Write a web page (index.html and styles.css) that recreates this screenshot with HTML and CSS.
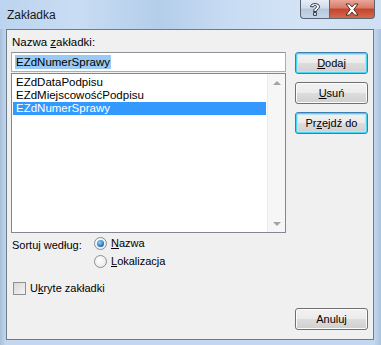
FILE: index.html
```html
<!DOCTYPE html>
<html lang="pl">
<head>
    <meta charset="UTF-8">
    <title>Zakładka</title>
    <link rel="stylesheet" href="styles.css">
</head>
<body>

    <div class="window">
        <div class="titlebar">
            <span class="title">Zakładka</span>
            <div class="caption-buttons">
                <div class="cap-btn help">
                    <svg width="12" height="15" viewBox="0 0 12 15">
                        <path d="M1.5 4.6 C1.5 0.6 10.5 0.6 10.5 4.6 C10.5 7.2 7.4 7.4 7.4 9.5 L4.6 9.5 C4.6 6.3 7.6 6.2 7.6 4.7 C7.6 3 4.4 3 4.4 4.9 Z M4.6 10.6 L7.4 10.6 L7.4 13.4 L4.6 13.4 Z" fill="#fff" stroke="#2e3440" stroke-width="1" stroke-linejoin="round"/>
                    </svg>
                </div>
                <div class="cap-btn close">
                    <svg width="16" height="13" viewBox="0 0 16 13">
                        <path d="M2 1 L5.5 1 L8 4 L10.5 1 L14 1 L9.8 6.5 L14 12 L10.5 12 L8 9 L5.5 12 L2 12 L6.2 6.5 Z" fill="#fff" stroke="#4a1d14" stroke-width="0.9" stroke-linejoin="round"/>
                    </svg>
                </div>
            </div>
        </div>

        <div class="client">
            <div class="main">
                <div class="left">
                    <div class="field-label">Nazwa <u>z</u>akładki:</div>
                    <div class="name-box"><span class="name-sel">EZdNumerSprawy</span></div>
                    <div class="list">
                        <div class="items">
                            <div class="item">EZdDataPodpisu</div>
                            <div class="item">EZdMiejscowośćPodpisu</div>
                            <div class="item selected">EZdNumerSprawy</div>
                        </div>
                        <div class="scrollbar">
                            <div class="arrow up"></div>
                            <div class="arrow down"></div>
                        </div>
                    </div>

                    <div class="sort">
                        <div class="sort-label">Sortuj według:</div>
                        <div class="radios">
                            <div class="option">
                                <span class="radio checked"></span>
                                <span><u>N</u>azwa</span>
                            </div>
                            <div class="option">
                                <span class="radio"></span>
                                <span><u>L</u>okalizacja</span>
                            </div>
                        </div>
                    </div>

                    <div class="option hidden-opt">
                        <span class="checkbox"></span>
                        <span>U<u>k</u>ryte zakładki</span>
                    </div>
                </div>

                <div class="buttons">
                    <div class="btn default"><u>D</u>odaj</div>
                    <div class="btn"><u>U</u>suń</div>
                    <div class="btn default">Pr<u>z</u>ejdź do</div>
                    <div class="btn cancel">Anuluj</div>
                </div>
            </div>
        </div>
    </div>

</body>
</html>
```

FILE: styles.css
```css
body {
    margin: 0;
    padding: 0;
    font-family: 'Liberation Sans', Arial, sans-serif;
    font-size: 11px;
    color: #000;
    background: #fff;
}
u {
    text-decoration: underline;
    text-underline-offset: 1px;
}
.window {
    width: 381px;
    height: 345px;
    display: flex;
    flex-direction: column;
    background: linear-gradient(to right, #a9bfd8 0px, #c3d8f0 6px, #c3d8f0 374px, #a9c2dd 381px);
}
.titlebar {
    height: 29px;
    display: flex;
    justify-content: space-between;
    align-items: flex-start;
    background: linear-gradient(to right, #bcd4ef 0%, #c9ddf3 20%, #b4cdea 42%, #c6dbf2 58%, #d4e4f6 80%, #cfe0f4 100%);
}
.title {
    font-size: 12px;
    color: #1a1a1a;
    margin: 8px 0 0 7px;
}
.caption-buttons {
    display: flex;
    margin-right: 6px;
}
.cap-btn {
    height: 19px;
    display: flex;
    align-items: center;
    justify-content: center;
    border: 1px solid #5b6572;
    border-top: none;
    box-sizing: border-box;
}
.cap-btn.help {
    width: 29px;
    border-right: none;
    border-radius: 0 0 0 4px;
    background: linear-gradient(#e6edf6, #cfdbea 45%, #b6c7dc 50%, #c6d6ea);
}
.cap-btn.close {
    width: 46px;
    border-radius: 0 0 4px 0;
    background: linear-gradient(#e9a698, #d67b68 45%, #c6432c 50%, #d26a50);
}
.client {
    flex: 1;
    margin: 0 7px 5px 6px;
    border: 1px solid #6d7b8b;
    background: #f0f0f0;
    padding: 3px 5px 9px 4px;
    display: flex;
}
.main {
    flex: 1;
    display: flex;
    gap: 9px;
}
.left {
    width: 275px;
    display: flex;
    flex-direction: column;
}
.field-label {
    line-height: 13px;
    margin: 3px 0 0 1px;
    font-size: 11.5px;
}
.name-box {
    height: 20px;
    margin-top: 3px;
    border: 1px solid #abadb3;
    border-top-color: #8e9299;
    background: #fff;
    box-sizing: border-box;
    padding: 2px 0 0 3px;
}
.name-sel {
    display: inline-block;
    background: #99c9f5;
    line-height: 14px;
    padding: 0 1px;
    font-size: 11.5px;
}
.list {
    height: 160px;
    margin-top: 1px;
    border: 1px solid #828790;
    background: #fff;
    box-sizing: border-box;
    display: flex;
    font-size: 11.5px;
}
.items {
    flex: 1;
    padding: 2px 1px 0 1px;
}
.item {
    line-height: 13px;
    padding-left: 3px;
}
.item.selected {
    background: #3399ff;
    color: #fff;
}
.scrollbar {
    width: 17px;
    background: #f6f6f6;
    border-left: 1px solid #ececec;
    display: flex;
    flex-direction: column;
    justify-content: space-between;
}
.arrow {
    height: 17px;
    display: flex;
    align-items: center;
    justify-content: center;
}
.arrow::after {
    content: '';
    border-left: 4px solid transparent;
    border-right: 4px solid transparent;
}
.arrow.up::after {
    border-bottom: 4px solid #a3a3a3;
}
.arrow.down::after {
    border-top: 4px solid #a3a3a3;
}
.sort {
    display: flex;
    margin-top: 4px;
}
.sort-label {
    width: 82px;
    padding-left: 1px;
    line-height: 13px;
    margin-top: 2px;
}
.radios {
    display: flex;
    flex-direction: column;
    gap: 5px;
}
.option {
    display: flex;
    align-items: center;
    gap: 4px;
    height: 13px;
    line-height: 13px;
}
.radio {
    width: 11px;
    height: 11px;
    border: 1px solid #8c8f94;
    border-radius: 50%;
    background: radial-gradient(circle at 40% 40%, #fff, #e2e3e6);
    position: relative;
}
.radio.checked::after {
    content: '';
    position: absolute;
    left: 2px;
    top: 2px;
    width: 7px;
    height: 7px;
    border-radius: 50%;
    background: radial-gradient(circle at 40% 35%, #8fd3ff, #1b6cb0 70%, #0f4d8a);
}
.hidden-opt {
    margin-top: 14px;
    margin-left: 2px;
    height: 13px;
}
.checkbox {
    width: 11px;
    height: 11px;
    border: 1px solid #8e8f8f;
    background: linear-gradient(135deg, #d8d8d8, #f4f4f4);
}
.buttons {
    width: 73px;
    display: flex;
    flex-direction: column;
    gap: 8px;
    padding-top: 19px;
}
.btn {
    height: 22px;
    box-sizing: border-box;
    border: 1px solid #707070;
    border-radius: 3px;
    background: linear-gradient(#f2f2f2, #ebebeb 50%, #dddddd 50%, #cfcfcf);
    box-shadow: inset 0 0 0 1px #fcfcfc;
    display: flex;
    align-items: center;
    justify-content: center;
}
.btn.default {
    border-color: #3c7fb1;
    box-shadow: inset 0 0 0 1px #48d7f7, inset 0 0 0 2px #b7e3f5;
}
.btn.cancel {
    margin-top: auto;
}
```
